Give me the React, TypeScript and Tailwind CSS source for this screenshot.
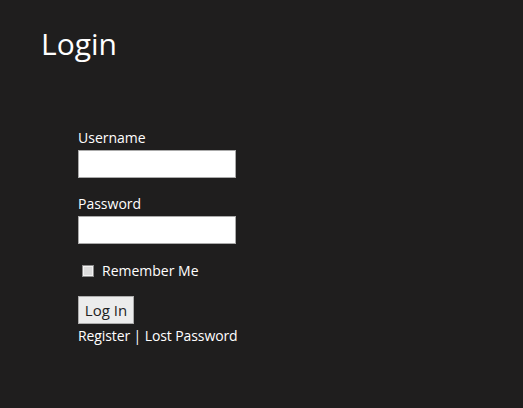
export default function App() {
  return (
    <div className="w-[523px] h-[408px] bg-[#1f1e1e] text-white font-['Open_Sans',sans-serif] overflow-hidden">
      <h1 className="pl-[41px] pt-[24px] text-[30px] leading-[40px] font-normal">Login</h1>

      <form className="ml-[78px] mt-[64px] flex flex-col w-[160px]">
        <label className="text-[14px] leading-[20px]">Username</label>
        <input type="text" className="mt-[2px] w-[158px] h-[28px] bg-white border border-[#aaa]" />

        <label className="mt-[16px] text-[14px] leading-[20px]">Password</label>
        <input type="password" className="mt-[2px] w-[158px] h-[28px] bg-white border border-[#aaa]" />

        <label className="mt-[17px] flex items-center text-[14px] leading-[20px] whitespace-nowrap">
          <input
            type="checkbox"
            className="appearance-none ml-[4px] mr-[8px] w-[12px] h-[12px] border border-[#8a8a8a] bg-[#dcdcdc] shadow-[inset_0_0_0_1px_#f2f2f2]"
          />
          Remember Me
        </label>

        <button
          type="button"
          className="mt-[15px] w-[56px] h-[28px] bg-[#ececec] border border-[#adadad] text-[#222] text-[15px] leading-[20px]"
        >
          Log In
        </button>

        <div className="mt-[2px] text-[14px] leading-[20px] whitespace-nowrap tracking-[-0.1px]">
          Register | Lost Password
        </div>
      </form>
    </div>
  );
}
